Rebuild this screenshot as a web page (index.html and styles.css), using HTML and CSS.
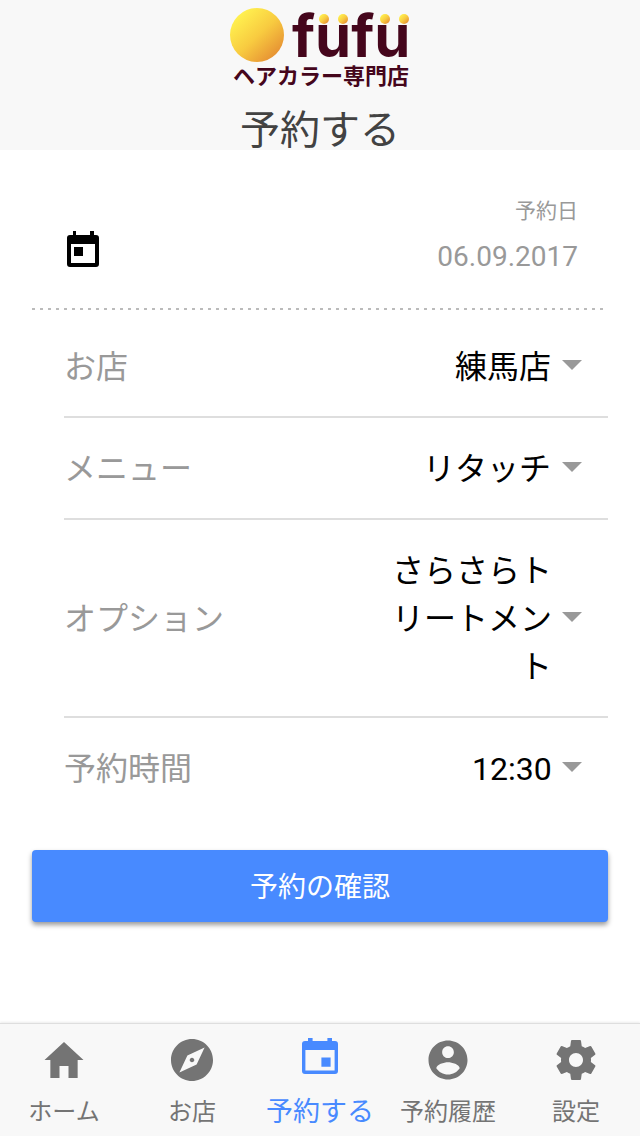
FILE: index.html
```html
<!DOCTYPE html>
<html lang="ja">
<head>
<meta charset="UTF-8" />
<meta name="viewport" content="width=device-width, initial-scale=1.0"/>
<title>予約する</title>
<link rel="stylesheet" href="styles.css">
</head>
<body>

<header class="header">
  <svg class="logo" viewBox="0 0 180 96" role="img" aria-label="fufu ヘアカラー専門店">
    <defs>
      <linearGradient id="sun" x1="0.15" y1="0.15" x2="0.85" y2="0.9">
        <stop offset="0" stop-color="#fff04f"/>
        <stop offset="0.5" stop-color="#f8cb40"/>
        <stop offset="1" stop-color="#e69033"/>
      </linearGradient>
    </defs>
    <circle cx="27" cy="35" r="27" fill="url(#sun)"/>
    <text class="logo-name" x="62" y="57">fufu</text>
    <circle cx="94" cy="19" r="5" fill="url(#sun)"/>
    <circle cx="113" cy="19" r="5" fill="url(#sun)"/>
    <circle cx="155" cy="19" r="5" fill="url(#sun)"/>
    <circle cx="174" cy="19" r="5" fill="url(#sun)"/>
    <text class="logo-sub" x="3" y="84">ヘアカラー専門店</text>
  </svg>
  <h1 class="title">予約する</h1>
</header>

<main class="content">
  <form class="form">
    <!-- Date -->
    <div class="date-item">
      <svg class="date-icon" viewBox="0 0 36 36" aria-hidden="true">
        <path fill-rule="evenodd" d="M8 0h3v4h14V0h4v4h2a3 3 0 0 1 3 3v26a3 3 0 0 1-3 3H5a3 3 0 0 1-3-3V7a3 3 0 0 1 3-3h3zM6 13v19h24V13zM9 16h9v9H9z"/>
      </svg>
      <div class="date-field">
        <label class="date-label" for="date">予約日</label>
        <input class="date-input" id="date" type="text" value="06.09.2017">
      </div>
    </div>

    <!-- Selects -->
    <div class="list">
      <div class="item">
        <label class="item-label" for="shop">お店</label>
        <div class="item-value">
          <select class="select" id="shop"><option>練馬店</option></select>
          <span class="arrow"></span>
        </div>
      </div>
      <div class="item">
        <label class="item-label" for="menu">メニュー</label>
        <div class="item-value">
          <select class="select" id="menu"><option>リタッチ</option></select>
          <span class="arrow"></span>
        </div>
      </div>
      <div class="item">
        <label class="item-label" for="option">オプション</label>
        <div class="item-value">
          <span class="select-text" aria-hidden="true">さらさらトリートメント</span>
          <select class="select-cover" id="option"><option>さらさらトリートメント</option></select>
          <span class="arrow"></span>
        </div>
      </div>
      <div class="item">
        <label class="item-label" for="time">予約時間</label>
        <div class="item-value">
          <select class="select" id="time"><option>12:30</option></select>
          <span class="arrow"></span>
        </div>
      </div>
    </div>

    <button class="submit" type="button">予約の確認</button>
  </form>
</main>

<nav class="tabs">
  <a class="tab" href="#home">
    <svg class="tab-icon" viewBox="0 0 512 512" aria-hidden="true"><path d="M208 448V320h96v128h97.6V256H464L256 64 48 256h62.4v192z"/></svg>
    <span class="tab-label">ホーム</span>
  </a>
  <a class="tab" href="#shop-list">
    <svg class="tab-icon" viewBox="0 0 512 512" aria-hidden="true"><path d="M256 231.4c-13.4 0-24.6 11.2-24.6 24.6s11.2 24.6 24.6 24.6 24.6-11.2 24.6-24.6-11.2-24.6-24.6-24.6zM256 32C132.8 32 32 132.8 32 256s100.8 224 224 224 224-100.8 224-224S379.2 32 256 32zm49.3 273.3L121.6 390.4l85.1-183.7L390.4 121.6l-85.1 183.7z"/></svg>
    <span class="tab-label">お店</span>
  </a>
  <a class="tab active" href="#reserve" aria-current="page">
    <svg class="tab-icon" viewBox="0 0 48 48" aria-hidden="true"><path fill-rule="evenodd" d="M12 6h4.6v3h14.8V6H36v3h3a3 3 0 0 1 3 3v27a3 3 0 0 1-3 3H9a3 3 0 0 1-3-3V12a3 3 0 0 1 3-3h3zM9.400 18v20.400h29.200V18zM25.400 25.600h9.200v9.200h-9.200z"/></svg>
    <span class="tab-label">予約する</span>
  </a>
  <a class="tab" href="#history">
    <svg class="tab-icon" viewBox="0 0 512 512" aria-hidden="true"><path d="M256 48C141.600 48 48 141.600 48 256s93.600 208 208 208 208-93.600 208-208S370.400 48 256 48zm0 62.400c34.300 0 62.400 28.100 62.400 62.400s-28.100 62.400-62.400 62.400-62.400-28.100-62.400-62.400 28.100-62.400 62.400-62.400zm0 300.400c-51.900 0-97.800-26.600-124.800-66.900.6-41.300 83.200-64.100 124.800-64.100s124.200 22.800 124.800 64.100c-27 40.300-72.900 66.900-124.800 66.900z"/></svg>
    <span class="tab-label">予約履歴</span>
  </a>
  <a class="tab" href="#settings">
    <svg class="tab-icon" viewBox="0 0 24 24" aria-hidden="true"><path d="M19.430 12.980c.04-.32.07-.64.07-.98s-.03-.66-.07-.98l2.110-1.650c.19-.15.24-.42.12-.64l-2-3.460c-.12-.22-.39-.3-.61-.22l-2.490 1c-.52-.4-1.080-.73-1.690-.98l-.38-2.650C14.460 2.180 14.250 2 14 2h-4c-.25 0-.46.18-.49.42l-.38 2.650c-.61.25-1.170.59-1.690.98l-2.490-1c-.23-.09-.49 0-.61.22l-2 3.460c-.13.22-.07.49.12.64l2.110 1.650c-.04.32-.07.65-.07.98s.03.66.07.98l-2.110 1.650c-.19.15-.24.42-.12.64l2 3.460c.12.22.39.3.61.22l2.490-1c.52.4 1.080.73 1.690.98l.38 2.650c.03.24.24.42.49.42h4c.25 0 .46-.18.49-.42l.38-2.650c.61-.25 1.170-.59 1.690-.98l2.490 1c.23.09.49 0 .61-.22l2-3.460c.12-.22.07-.49-.12-.64l-2.110-1.650zM12 15.500c-1.930 0-3.500-1.570-3.500-3.500s1.570-3.500 3.500-3.500 3.500 1.570 3.500 3.500-1.570 3.500-3.500 3.500z"/></svg>
    <span class="tab-label">設定</span>
  </a>
</nav>

</body>
</html>
```
FILE: styles.css
```css
:root {
  --primary: #488aff;
  --bar: #f8f8f8;
  --line: #dedede;
  --label: #999;
  --brand: #45061c;
}

* {
  box-sizing: border-box;
}

body {
  margin: 0;
  min-height: 100vh;
  display: flex;
  flex-direction: column;
  background: #fff;
  color: #000;
  font-family: Roboto, "Noto Sans CJK JP", sans-serif;
}

input,
select,
button {
  margin: 0;
  padding: 0;
  border: none;
  background: none;
  font-family: inherit;
}

/* Header */
.header {
  display: flex;
  flex-direction: column;
  align-items: center;
  background: var(--bar);
}

.logo {
  width: 180px;
  height: 96px;
  overflow: visible;
}

.logo-name {
  font-family: Inter, sans-serif;
  font-size: 58px;
  font-weight: 700;
  fill: var(--brand);
}

.logo-sub {
  font-family: "Noto Sans CJK JP", sans-serif;
  font-size: 22px;
  font-weight: 700;
  fill: var(--brand);
}

.title {
  margin: 16px 0 0;
  font-size: 40px;
  font-weight: 400;
  line-height: 38px;
  color: #424242;
}

/* Form */
.content {
  flex: 1;
  padding: 32px;
}

.date-item {
  display: flex;
  align-items: flex-end;
  justify-content: space-between;
  height: 128px;
  padding: 0 30px 35px 33px;
  background: repeating-linear-gradient(to right, #bbb 0 3px, transparent 3px 8px) bottom / 100% 2px no-repeat;
}

.date-icon {
  width: 36px;
  height: 36px;
  margin-bottom: 8px;
}

.date-field {
  display: flex;
  flex-direction: column;
  gap: 12px;
  text-align: right;
}

.date-label {
  font-size: 21px;
  line-height: 28px;
  color: var(--label);
}

.date-input {
  width: 240px;
  height: 38px;
  font-size: 28px;
  text-align: right;
  color: var(--label);
}

.list {
  padding: 6px 0 0 32px;
}

.item {
  display: flex;
  align-items: center;
  justify-content: space-between;
  padding: 27px 26px 25px 0;
  border-bottom: 2px solid var(--line);
  font-size: 32px;
  line-height: 48px;
}

.item:last-child {
  border-bottom: none;
}

.item-label {
  color: var(--label);
}

.item-value {
  position: relative;
  display: flex;
  align-items: center;
  gap: 10px;
}

.select {
  appearance: none;
  height: 48px;
  font-size: 32px;
  line-height: 48px;
  color: #000;
}

.select-text {
  max-width: 176px;
  text-align: right;
}

/* the long value wraps, so the real select lies over its text */
.select-cover {
  position: absolute;
  inset: 0;
  width: 100%;
  opacity: 0;
}

.arrow {
  margin-bottom: 4px;
  border-top: 10px solid var(--label);
  border-left: 10px solid transparent;
  border-right: 10px solid transparent;
}

.submit {
  display: block;
  width: 100%;
  height: 72px;
  margin-top: 32px;
  padding-bottom: 2px;
  border-radius: 4px;
  background: var(--primary);
  box-shadow: 0 3px 5px rgba(0, 0, 0, .4);
  font-size: 28px;
  color: #fff;
}

/* Tabs */
.tabs {
  display: flex;
  height: 113px;
  border-top: 1px solid var(--line);
  background: var(--bar);
  box-shadow: 0 -1px 2px rgba(0, 0, 0, .08);
}

.tab {
  flex: 1;
  display: flex;
  flex-direction: column;
  align-items: center;
  gap: 14px;
  padding-top: 12px;
  color: #747474;
  font-size: 24px;
  line-height: 28px;
  text-decoration: none;
}

.tab.active {
  padding-top: 8px;
  gap: 18px;
  color: var(--primary);
  font-size: 27px;
}

.tab-icon {
  width: 48px;
  height: 48px;
  fill: currentColor;
}
```
